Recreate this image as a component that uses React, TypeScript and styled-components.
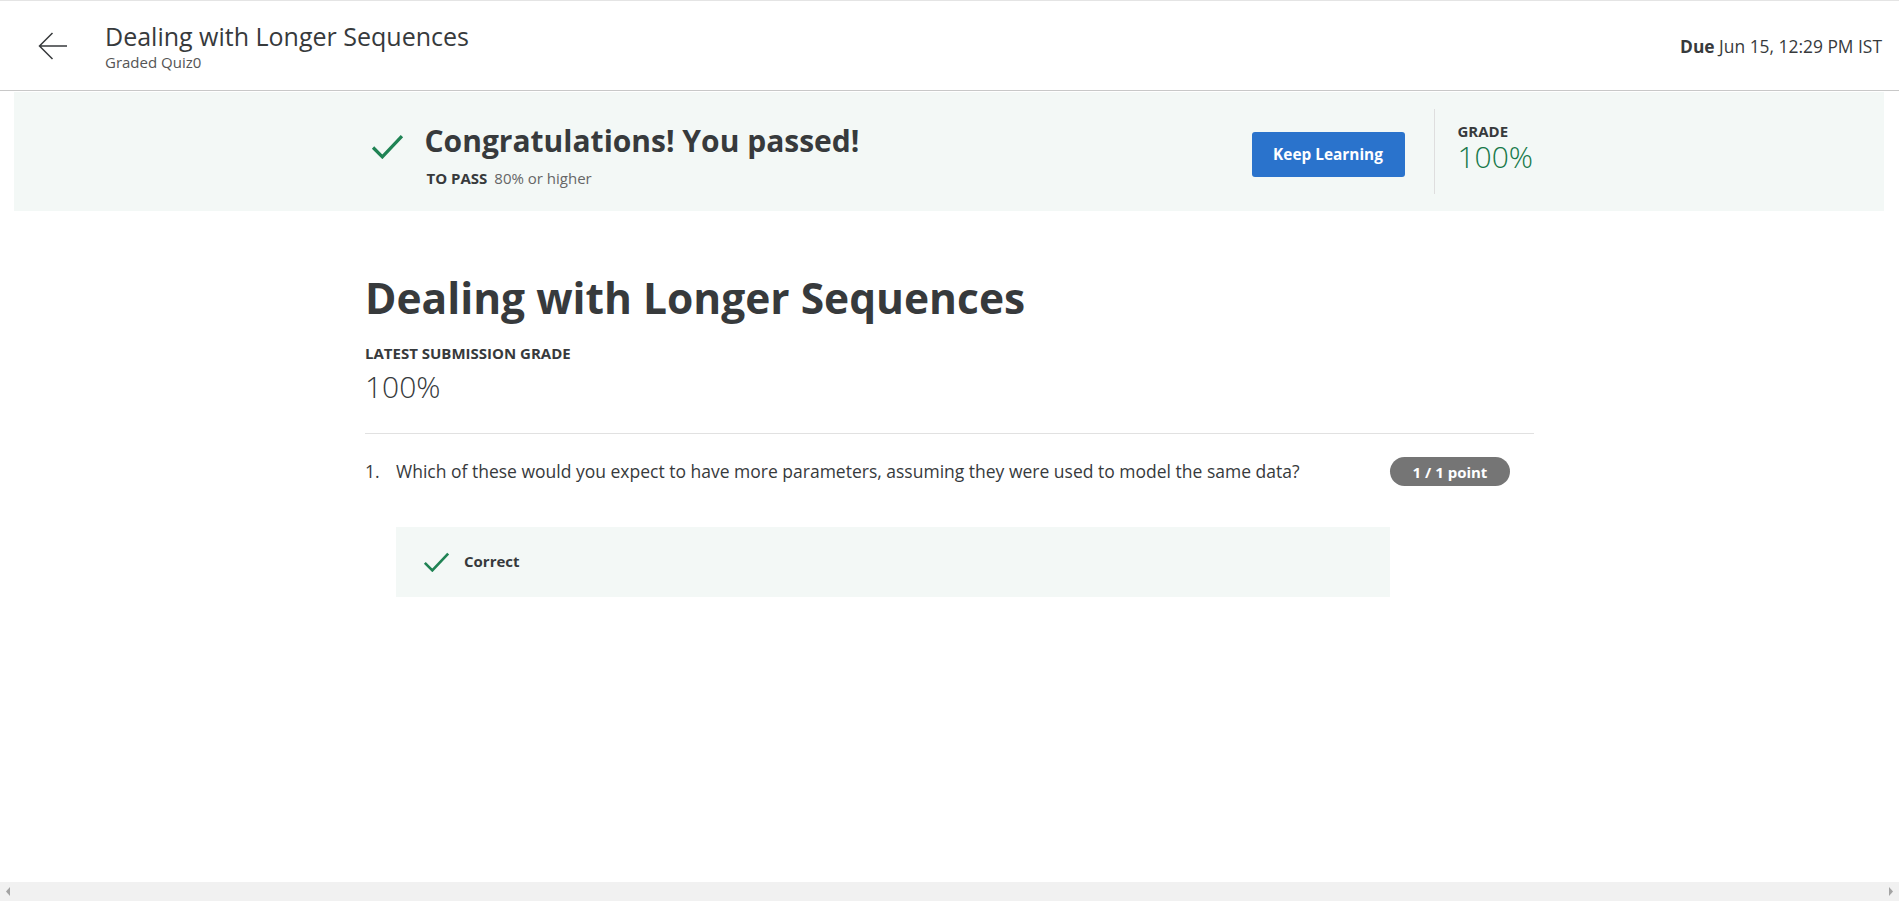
import React from "react";
import styled, { createGlobalStyle } from "styled-components";

const Global = createGlobalStyle`
  html, body { margin: 0; padding: 0; background: #ffffff; }
  body { font-family: "Open Sans", "Noto Sans", sans-serif; color: #373a3c; }
  * { box-sizing: border-box; }
`;

const Page = styled.div`
  height: 100vh;
  display: flex;
  flex-direction: column;
  overflow: hidden;
`;

const Header = styled.header`
  height: 91px;
  flex: none;
  border-top: 1px solid #e4e4e4;
  border-bottom: 1px solid #c8c8c8;
  display: flex;
  align-items: center;
  padding: 0 17px 0 38px;
`;

const BackButton = styled.button`
  border: 0;
  background: none;
  padding: 0;
  width: 30px;
  height: 28px;
  display: flex;
  cursor: pointer;
`;

const HeaderTitles = styled.div`
  display: flex;
  flex-direction: column;
  margin-left: 37px;
  flex: 1;
`;

const HeaderTitle = styled.h1`
  margin: 0;
  font-size: 25px;
  line-height: 32px;
  font-weight: 400;
  color: #373a3c;
`;

const HeaderSub = styled.div`
  font-size: 15px;
  line-height: 20px;
  color: #555;
`;

const Due = styled.div`
  font-size: 17.4px;
  line-height: 24px;
  color: #373a3c;
  b { font-weight: 700; }
`;

const Main = styled.main`
  flex: 1;
  display: flex;
  flex-direction: column;
`;

const Banner = styled.section`
  margin: 1px 15px 0 14px;
  height: 119px;
  background: #f3f8f6;
  display: flex;
  justify-content: center;
`;

const Column = styled.div`
  width: 1169px;
  display: flex;
`;

const BannerRow = styled(Column)`
  justify-content: space-between;
  align-items: center;
`;

const PassBlock = styled.div`
  display: flex;
  align-items: flex-start;
  padding-left: 6px;
  padding-top: 6px;
`;

const PassIcon = styled.svg`
  width: 33px;
  height: 25px;
  margin-top: 12px;
  margin-right: 21px;
  flex: none;
`;

const PassText = styled.div`
  display: flex;
  flex-direction: column;
`;

const PassTitle = styled.h2`
  margin: 0;
  font-size: 30px;
  line-height: 38px;
  font-weight: 700;
  color: #373a3c;
`;

const PassSub = styled.div`
  margin-top: 8px;
  font-size: 15px;
  line-height: 20px;
  color: #666;
  padding-left: 2px;
  b { color: #373a3c; font-weight: 700; margin-right: 7px; }
`;

const RightGroup = styled.div`
  display: flex;
  align-items: center;
`;

const PrimaryButton = styled.button`
  width: 153px;
  height: 45px;
  margin-top: 6px;
  background: #2a73cc;
  border: 0;
  border-radius: 3px;
  color: #fff;
  font-family: "Open Sans", sans-serif;
  font-weight: 700;
  font-size: 15.4px;
  cursor: pointer;
`;

const VDivider = styled.div`
  width: 1px;
  height: 85px;
  background: #dedede;
  margin: 0 23px 0 29px;
`;

const GradeBox = styled.div`
  display: flex;
  flex-direction: column;
  padding-bottom: 8px;
  width: 76px;
`;

const SmallLabel = styled.div<{ $tight?: boolean }>`
  font-size: 15px;
  line-height: ${(p) => (p.$tight ? "16px" : "20px")};
  font-weight: 700;
  color: #373a3c;
  text-transform: uppercase;
`;

const BigValue = styled.div<{ $green?: boolean }>`
  font-size: 30px;
  line-height: ${(p) => (p.$green ? "30px" : "36px")};
  margin-top: ${(p) => (p.$green ? "3px" : "0")};
  font-weight: 300;
  color: ${(p) => (p.$green ? "#17784a" : "#373a3c")};
`;

const Content = styled.div`
  display: flex;
  justify-content: center;
`;

const ContentColumn = styled(Column)`
  flex-direction: column;
  padding-top: 59px;
`;

const PageTitle = styled.h1`
  margin: 0;
  font-size: 42.5px;
  line-height: 56px;
  font-weight: 700;
  color: #373a3c;
`;

const LatestLabel = styled(SmallLabel)`
  margin-top: 17px;
`;

const LatestValue = styled(BigValue)`
  margin-top: 6px;
`;

const Rule = styled.hr`
  border: 0;
  height: 1px;
  background: #e1e1e1;
  margin: 28px 0 0 0;
`;

const Question = styled.div`
  display: grid;
  grid-template-columns: 31px 1fr 120px;
  padding-right: 24px;
  margin-top: 24px;
`;

const QNum = styled.div`
  font-size: 17.5px;
  line-height: 26px;
  color: #373a3c;
`;

const QBody = styled.div`
  display: flex;
  flex-direction: column;
`;

const QText = styled.div`
  font-size: 17.5px;
  line-height: 26px;
  color: #373a3c;
`;

const PointBadge = styled.div`
  height: 29px;
  margin-top: -1px;
  border-radius: 15px;
  background: #757575;
  color: #fff;
  font-size: 15px;
  font-weight: 700;
  display: flex;
  align-items: center;
  justify-content: center;
`;

const Feedback = styled.div`
  margin-top: 43px;
  height: 70px;
  background: #f3f8f6;
  display: flex;
  align-items: center;
  padding-left: 27px;
`;

const FeedbackIcon = styled.svg`
  width: 27px;
  height: 20px;
  margin-right: 14px;
`;

const FeedbackText = styled.span`
  font-size: 15px;
  font-weight: 700;
  color: #373a3c;
  margin-top: -2px;
`;

const ScrollTrack = styled.div`
  height: 19px;
  flex: none;
  background: #f1f1f1;
  display: flex;
  align-items: center;
  justify-content: space-between;
  padding: 0 5px;
`;

const ScrollArrow = styled.svg`
  width: 6px;
  height: 9px;
`;

const Check = ({ color = "#1f8354" }: { color?: string }) => (
  <path d="M2 13 L11 22 L30 2" fill="none" stroke={color} strokeWidth="3.2" />
);

export default function App() {
  return (
    <Page>
      <Global />
      <Header>
        <BackButton aria-label="Back">
          <svg width="30" height="28" viewBox="0 0 30 28">
            <path d="M29 14 H2 M14.5 1 L1.5 14 L14.5 27" fill="none" stroke="#373a3c" strokeWidth="1.5" />
          </svg>
        </BackButton>
        <HeaderTitles>
          <HeaderTitle>Dealing with Longer Sequences</HeaderTitle>
          <HeaderSub>Graded Quiz0</HeaderSub>
        </HeaderTitles>
        <Due>
          <b>Due</b> Jun 15, 12:29 PM IST
        </Due>
      </Header>
      <Main>
        <Banner>
          <BannerRow>
            <PassBlock>
              <PassIcon viewBox="0 0 32 24">
                <Check />
              </PassIcon>
              <PassText>
                <PassTitle>Congratulations! You passed!</PassTitle>
                <PassSub>
                  <b>TO PASS</b>80% or higher
                </PassSub>
              </PassText>
            </PassBlock>
            <RightGroup>
              <PrimaryButton>Keep Learning</PrimaryButton>
              <VDivider />
              <GradeBox>
                <SmallLabel $tight>Grade</SmallLabel>
                <BigValue $green>100%</BigValue>
              </GradeBox>
            </RightGroup>
          </BannerRow>
        </Banner>
        <Content>
          <ContentColumn>
            <PageTitle>Dealing with Longer Sequences</PageTitle>
            <LatestLabel>Latest Submission Grade</LatestLabel>
            <LatestValue>100%</LatestValue>
            <Rule />
            <Question>
              <QNum>1.</QNum>
              <QBody>
                <QText>
                  Which of these would you expect to have more parameters, assuming they were used to model the same data?
                </QText>
                <Feedback>
                  <FeedbackIcon viewBox="0 0 32 24">
                    <Check />
                  </FeedbackIcon>
                  <FeedbackText>Correct</FeedbackText>
                </Feedback>
              </QBody>
              <PointBadge>1 / 1 point</PointBadge>
            </Question>
          </ContentColumn>
        </Content>
      </Main>
      <ScrollTrack>
        <ScrollArrow viewBox="0 0 6 9">
          <path d="M5 0 L1 4.5 L5 9 Z" fill="#a3a3a3" />
        </ScrollArrow>
        <ScrollArrow viewBox="0 0 6 9">
          <path d="M1 0 L5 4.5 L1 9 Z" fill="#a3a3a3" />
        </ScrollArrow>
      </ScrollTrack>
    </Page>
  );
}
